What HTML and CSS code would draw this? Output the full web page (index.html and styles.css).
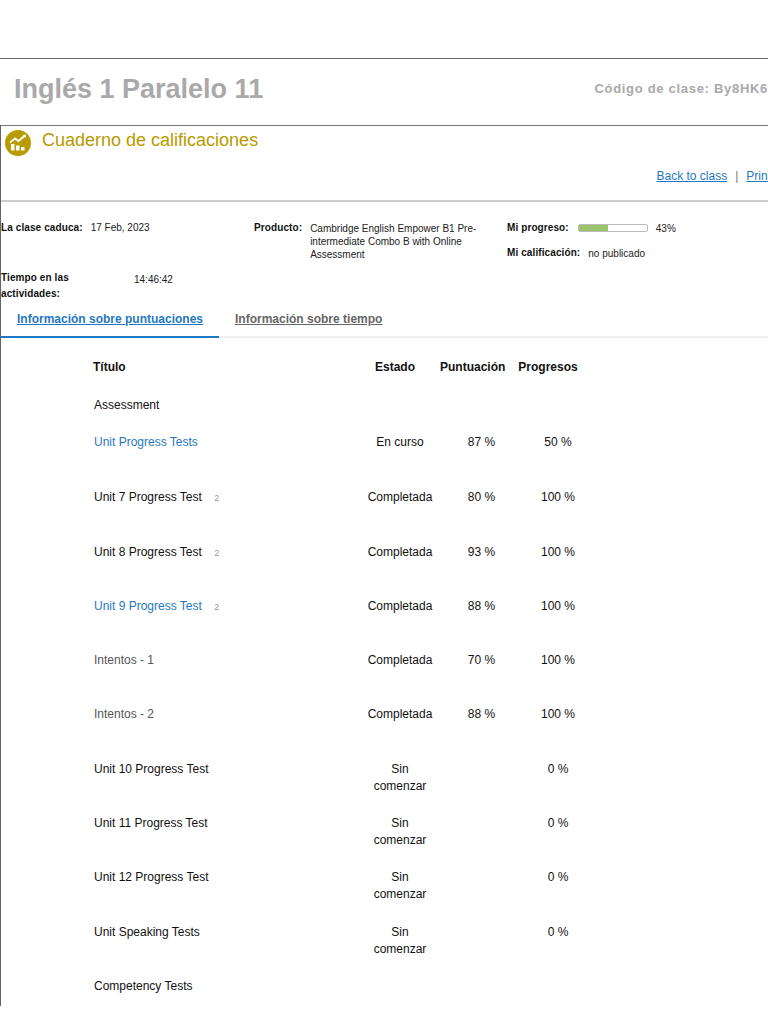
FILE: index.html
```html
<!DOCTYPE html>
<html lang="en">
<head>
  <meta charset="UTF-8">
  <meta name="viewport" content="width=device-width, initial-scale=1.0">
  <title>Cuaderno de calificaciones</title>
  <link rel="stylesheet" href="styles.css">
</head>
<body>
  <div class="page">

    <!-- Class title -->
    <div class="class-header">
      <h1 class="class-title">Inglés 1 Paralelo 11</h1>
      <div class="class-code">Código de clase: By8HK6</div>
    </div>

    <div class="gradebook">
      <div class="book-title">
        <svg class="book-icon" viewBox="0 0 26 26" width="26" height="26">
          <circle cx="13" cy="13" r="13" fill="#b89b00"/>
          <path d="M5 12.5 L10 8.5 L13.5 11 L20 5.5" fill="none" stroke="#fff" stroke-width="1.8"/>
          <path d="M17.5 5 L21 4.5 L20.5 8 Z" fill="#fff"/>
          <rect x="6" y="14" width="3.5" height="6.5" fill="#fff"/>
          <rect x="11" y="15.5" width="3.5" height="5" fill="#fff"/>
          <rect x="16" y="17" width="3.5" height="3.5" fill="#fff"/>
        </svg>
        <h2>Cuaderno de calificaciones</h2>
      </div>

      <div class="book-links">
        <a href="#">Back to class</a>
        <span class="sep">|</span>
        <a href="#">Print</a>
      </div>

      <!-- Class info -->
      <div class="info">
        <div class="info-col info-left">
          <div class="info-row">
            <span class="label">La clase caduca:</span>
            <span class="value">17 Feb, 2023</span>
          </div>
          <div class="info-row info-time">
            <span class="label label-time">Tiempo en las actividades:</span>
            <span class="value time-value">14:46:42</span>
          </div>
        </div>
        <div class="info-col info-product">
          <span class="label">Producto:</span>
          <span class="value product-name">Cambridge English Empower B1 Pre-intermediate Combo B with Online Assessment</span>
        </div>
        <div class="info-col info-right">
          <div class="info-row">
            <span class="label">Mi progreso:</span>
            <span class="progress"><span class="progress-fill" style="width: 43%"></span></span>
            <span class="value">43%</span>
          </div>
          <div class="info-row info-grade">
            <span class="label">Mi calificación:</span>
            <span class="value">no publicado</span>
          </div>
        </div>
      </div>

      <!-- Tabs -->
      <div class="tabs">
        <a class="tab active" href="#">Información sobre puntuaciones</a>
        <a class="tab" href="#">Información sobre tiempo</a>
      </div>

      <table class="scores">
        <thead>
          <tr>
            <th class="col-title">Título</th>
            <th class="col-state">Estado</th>
            <th class="col-score">Puntuación</th>
            <th class="col-progress">Progresos</th>
          </tr>
        </thead>
        <tbody>
          <tr class="group"><td class="col-title">Assessment</td><td class="col-state"></td><td class="col-score"></td><td class="col-progress"></td></tr>
          <tr class="first"><td class="col-title"><a href="#">Unit Progress Tests</a></td><td class="col-state">En curso</td><td class="col-score">87 %</td><td class="col-progress">50 %</td></tr>
          <tr><td class="col-title">Unit 7 Progress Test <span class="count">2</span></td><td class="col-state">Completada</td><td class="col-score">80 %</td><td class="col-progress">100 %</td></tr>
          <tr><td class="col-title">Unit 8 Progress Test <span class="count">2</span></td><td class="col-state">Completada</td><td class="col-score">93 %</td><td class="col-progress">100 %</td></tr>
          <tr><td class="col-title"><a href="#">Unit 9 Progress Test</a> <span class="count">2</span></td><td class="col-state">Completada</td><td class="col-score">88 %</td><td class="col-progress">100 %</td></tr>
          <tr><td class="col-title muted">Intentos - 1</td><td class="col-state">Completada</td><td class="col-score">70 %</td><td class="col-progress">100 %</td></tr>
          <tr><td class="col-title muted">Intentos - 2</td><td class="col-state">Completada</td><td class="col-score">88 %</td><td class="col-progress">100 %</td></tr>
          <tr><td class="col-title">Unit 10 Progress Test</td><td class="col-state">Sin<br>comenzar</td><td class="col-score"></td><td class="col-progress">0 %</td></tr>
          <tr><td class="col-title">Unit 11 Progress Test</td><td class="col-state">Sin<br>comenzar</td><td class="col-score"></td><td class="col-progress">0 %</td></tr>
          <tr><td class="col-title">Unit 12 Progress Test</td><td class="col-state">Sin<br>comenzar</td><td class="col-score"></td><td class="col-progress">0 %</td></tr>
          <tr><td class="col-title">Unit Speaking Tests</td><td class="col-state">Sin<br>comenzar</td><td class="col-score"></td><td class="col-progress">0 %</td></tr>
          <tr class="group"><td class="col-title">Competency Tests</td><td class="col-state"></td><td class="col-score"></td><td class="col-progress"></td></tr>
        </tbody>
      </table>
    </div>
  </div>
</body>
</html>
```
FILE: styles.css
```css
html, body {
  margin: 0;
  padding: 0;
  height: 1024px;
  overflow: hidden;
  background: white;
  font-family: "Liberation Sans", Arial, sans-serif;
  color: #111;
}

.page {
  width: 768px;
  height: 1006px;
  padding-top: 58px;
  box-sizing: border-box;
  overflow: hidden;
}

/* Class title bar */
.class-header {
  height: 67px;
  box-sizing: border-box;
  border-top: 1px solid #666;
  padding-left: 14px;
  display: flex;
  justify-content: space-between;
  align-items: center;
  white-space: nowrap;
}

.class-title {
  margin: 0 0 5px;
  font-size: 27px;
  font-weight: bold;
  color: #a9a9a9;
}

.class-code {
  font-size: 13px;
  font-weight: bold;
  letter-spacing: 0.7px;
  color: #a9a9a9;
  margin-bottom: 7px;
}

/* Main box */
.gradebook {
  height: 881px;
  box-sizing: border-box;
  border-top: 1px solid #777;
  border-left: 1px solid #666;
}

.book-title {
  height: 38px;
  padding: 4px 0 0 4px;
  box-sizing: border-box;
  display: flex;
  gap: 11px;
}

.book-title h2 {
  margin: 0;
  font-size: 18px;
  font-weight: normal;
  line-height: 21px;
  color: #b89b00;
}

.book-links {
  height: 38px;
  box-sizing: border-box;
  border-bottom: 2px solid #ccc;
  display: flex;
  justify-content: flex-end;
  gap: 8px;
  padding-top: 4px;
  font-size: 12px;
  line-height: 16px;
  white-space: nowrap;
  margin-right: -3px;
}

.book-links a {
  color: #1f78c1;
}

.sep {
  color: #777;
}

/* Info block */
.info {
  height: 101px;
  box-sizing: border-box;
  padding-top: 19px;
  display: flex;
  font-size: 10px;
  line-height: 13px;
}

.label {
  font-weight: bold;
  letter-spacing: 0.1px;
}

.value {
  color: #222;
}

.info-left {
  width: 253px;
}

.info-row {
  display: flex;
  gap: 8px;
}

.info-time {
  margin-top: 36px;
  line-height: 16px;
}

.label-time {
  width: 125px;
}

.time-value {
  padding-top: 2px;
}

.info-product {
  width: 253px;
  display: flex;
  gap: 8px;
}

.product-name {
  width: 175px;
  padding-top: 1px;
}

.info-right .value {
  padding-top: 1px;
}

.info-grade {
  margin-top: 11px;
}

.progress {
  width: 68px;
  height: 6px;
  margin: 3px 0 0 1px;
  border: 1px solid #bbb;
  border-radius: 2px;
}

.progress-fill {
  display: block;
  height: 100%;
  background: #9bc46d;
}

/* Tabs */
.tabs {
  height: 35px;
  box-sizing: border-box;
  border-bottom: 2px solid #eee;
  display: flex;
  font-size: 12px;
  font-weight: bold;
}

.tab {
  padding: 9px 16px 0;
  height: 35px;
  box-sizing: border-box;
  color: #666;
}

.active {
  color: #1f78c1;
  border-bottom: 2px solid #1f78c1;
}

/* Score table */
.scores {
  table-layout: fixed;
  border-collapse: collapse;
  width: 590px;
  font-size: 12px;
  line-height: 17px;
}

.scores th {
  height: 59px;
  padding: 0;
  font-size: 12px;
  text-align: center;
}

.scores td {
  height: 54.3px;
  padding: 0;
  text-align: center;
  vertical-align: top;
}

.scores .group td {
  height: 37px;
}

.scores .first td {
  height: 55.3px;
}

.scores th.col-title {
  width: 257px;
  padding-left: 92px;
  text-align: left;
}

.scores td.col-title {
  padding-left: 93px;
  text-align: left;
}

.col-state {
  width: 90px;
}

.col-score {
  width: 65px;
}

.col-progress {
  width: 86px;
}

/* body cells sit a little right of their headers */
.scores td.col-state {
  padding-left: 10px;
}

.scores td.col-score {
  padding-left: 18px;
}

.scores td.col-progress {
  padding-left: 20px;
}

.scores a {
  color: #1f78c1;
  text-decoration: none;
}

.muted {
  color: #555;
}

.count {
  margin-left: 9px;
  font-size: 9px;
  color: #999;
}
```
